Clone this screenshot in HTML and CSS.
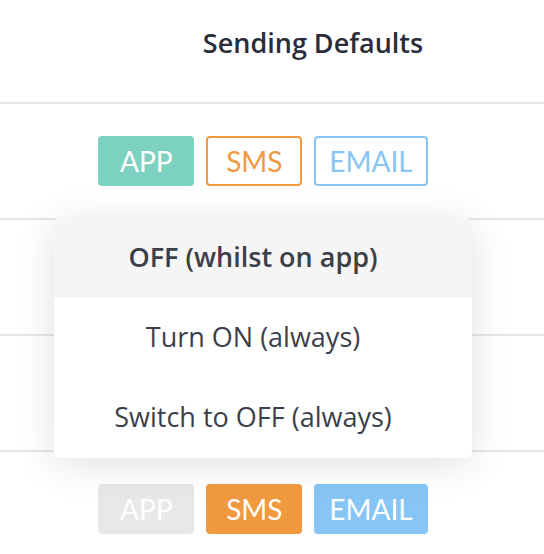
FILE: index.html
```html
<!DOCTYPE html>
<html lang="en">
  <head>
    <meta charset="UTF-8" />
    <meta name="viewport" content="width=device-width, initial-scale=1.0" />
    <title>Sending Defaults</title>
    <link rel="stylesheet" href="styles.css">
  </head>
  <body>
    <div class="defaults-table">
      <div class="table-header">Sending Defaults</div>

      <div class="table-row">
        <div class="channels">
          <span class="channel app on">APP</span>
          <span class="channel sms">SMS</span>
          <span class="channel email">EMAIL</span>
        </div>
      </div>

      <!-- rows under the open dropdown -->
      <div class="table-row"></div>
      <div class="table-row"></div>

      <div class="table-row">
        <div class="channels">
          <span class="channel app off">APP</span>
          <span class="channel sms on">SMS</span>
          <span class="channel email on">EMAIL</span>
        </div>
      </div>

      <div class="dropdown">
        <div class="dropdown-item selected">OFF (whilst on app)</div>
        <div class="dropdown-item">Turn ON (always)</div>
        <div class="dropdown-item">Switch to OFF (always)</div>
      </div>
    </div>
  </body>
</html>
```

FILE: styles.css
```css
* {
  margin: 0;
  padding: 0;
  box-sizing: border-box;
  font-family: "Open Sans", sans-serif;
}

body {
  background: #ffffff;
  overflow: hidden;
}

.defaults-table {
  position: relative;
  width: 544px;
}

.table-header {
  height: 104px;
  padding: 25px 0 0 82px;
  text-align: center;
  font-size: 27px;
  line-height: 36px;
  font-weight: 600;
  color: #2a2d39;
  border-bottom: 2px solid #e6e6e6;
}

.table-row {
  height: 116px;
  display: flex;
  align-items: center;
  justify-content: center;
  border-bottom: 2px solid #e6e6e6;
}

.channels {
  display: flex;
  gap: 12px;
  margin-left: -18px;
}

.channel {
  min-width: 96px;
  height: 50px;
  padding: 0 13px;
  display: flex;
  align-items: center;
  justify-content: center;
  border: 2px solid transparent;
  border-radius: 4px;
  font-family: Lato, sans-serif;
  font-size: 28px;
  color: #ffffff;
}

.channel.app {
  border-color: #7dd1c0;
  color: #7dd1c0;
}

.channel.sms {
  border-color: #f0993f;
  color: #f0993f;
}

.channel.email {
  border-color: #86c5f5;
  color: #86c5f5;
}

.channel.app.on {
  background: #7dd1c0;
  color: #ffffff;
}

.channel.sms.on {
  background: #f0993f;
  color: #ffffff;
}

.channel.email.on {
  background: #86c5f5;
  color: #ffffff;
}

.channel.app.off {
  background: #e8e8e8;
  border-color: #e8e8e8;
  color: #ffffff;
}

.dropdown {
  position: absolute;
  top: 218px;
  left: 54px;
  width: 418px;
  background: #ffffff;
  border-radius: 6px;
  overflow: hidden;
  box-shadow: 0 6px 40px rgba(0, 0, 0, 0.12);
}

.dropdown-item {
  height: 80px;
  padding-right: 20px;
  text-align: center;
  font-size: 27px;
  line-height: 78px;
  color: #3c3f4a;
}

.dropdown-item.selected {
  background: #f5f5f5;
  font-weight: 600;
}
```
